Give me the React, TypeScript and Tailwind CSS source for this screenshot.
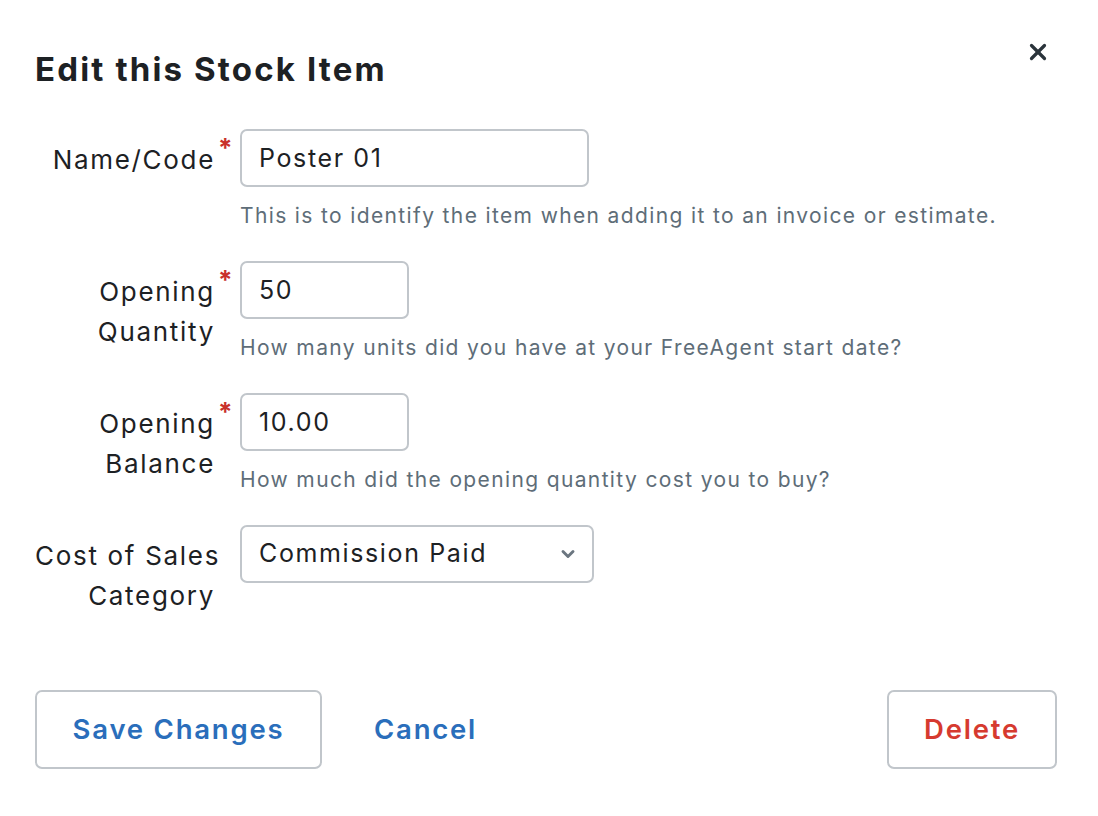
import { X, ChevronDown } from 'lucide-react'

interface FieldRowProps {
  label: string[]
  required?: boolean
  children: React.ReactNode
  help?: string
}

function FieldRow({ label, required, children, help }: FieldRowProps) {
  return (
    <div className="flex">
      <div className="w-[180px] pt-[11px] text-right text-[26px] leading-[40px] tracking-[0.065em] text-[#1d2124]">
        {label.map((l) => (
          <div key={l} className="whitespace-nowrap">{l}</div>
        ))}
      </div>
      <div className="w-[25px] pl-[3px] pt-[6px] text-[26px] leading-none font-bold text-[#c8312b]">
        {required ? '*' : ''}
      </div>
      <div className="flex flex-col">
        {children}
        {help && (
          <p className="mt-[16px] whitespace-nowrap text-[21px] leading-[26px] tracking-[0.065em] text-[#5e6d78]">{help}</p>
        )}
      </div>
    </div>
  )
}

export default function App() {
  return (
    <div
      className="relative w-[1098px] h-[816px] bg-white pl-[35px] pr-[41px] pt-[46px]"
      style={{ fontFamily: 'Inter, "Noto Sans", sans-serif' }}
    >
      <button className="absolute right-[47px] top-[39px] text-[#2b343b]">
        <X size={26} strokeWidth={3} />
      </button>

      <h1 className="text-[33px] leading-[46px] font-bold tracking-[0.065em] text-[#1d2124]">
        Edit this Stock Item
      </h1>

      <div className="mt-[37px] flex flex-col gap-[32px]">
        <FieldRow
          label={['Name/Code']}
          required
          help="This is to identify the item when adding it to an invoice or estimate."
        >
          <input
            defaultValue="Poster 01"
            className="w-[349px] h-[58px] rounded-[7px] border-2 border-[#c1c6cb] px-[17px] text-[25px] tracking-[0.065em] text-[#1d2124] outline-none"
          />
        </FieldRow>

        <FieldRow
          label={['Opening', 'Quantity']}
          required
          help="How many units did you have at your FreeAgent start date?"
        >
          <input
            defaultValue="50"
            className="w-[169px] h-[58px] rounded-[7px] border-2 border-[#c1c6cb] px-[17px] text-[25px] tracking-[0.065em] text-[#1d2124] outline-none"
          />
        </FieldRow>

        <FieldRow
          label={['Opening', 'Balance']}
          required
          help="How much did the opening quantity cost you to buy?"
        >
          <input
            defaultValue="10.00"
            className="w-[169px] h-[58px] rounded-[7px] border-2 border-[#c1c6cb] px-[17px] text-[25px] tracking-[0.065em] text-[#1d2124] outline-none"
          />
        </FieldRow>

        <FieldRow label={['Cost of Sales', 'Category']}>
          <div className="flex w-[354px] h-[58px] items-center justify-between rounded-[7px] border-2 border-[#c1c6cb] pl-[17px] pr-[14px] text-[25px] tracking-[0.065em] text-[#1d2124]">
            <span>Commission Paid</span>
            <ChevronDown size={20} strokeWidth={3.5} className="text-[#6b7680]" />
          </div>
        </FieldRow>
      </div>

      <div className="mt-[74px] flex items-center justify-between">
        <div className="flex items-center gap-[52px]">
          <button className="w-[287px] h-[79px] rounded-[7px] border-2 border-[#c1c6cb] text-[27.5px] font-semibold tracking-[0.065em] text-[#2a6ebb]">
            Save Changes
          </button>
          <button className="text-[27.5px] font-semibold tracking-[0.065em] text-[#2a6ebb]">Cancel</button>
        </div>
        <button className="w-[170px] h-[79px] rounded-[7px] border-2 border-[#c1c6cb] text-[27.5px] font-semibold tracking-[0.065em] text-[#d63a2f]">
          Delete
        </button>
      </div>
    </div>
  )
}
